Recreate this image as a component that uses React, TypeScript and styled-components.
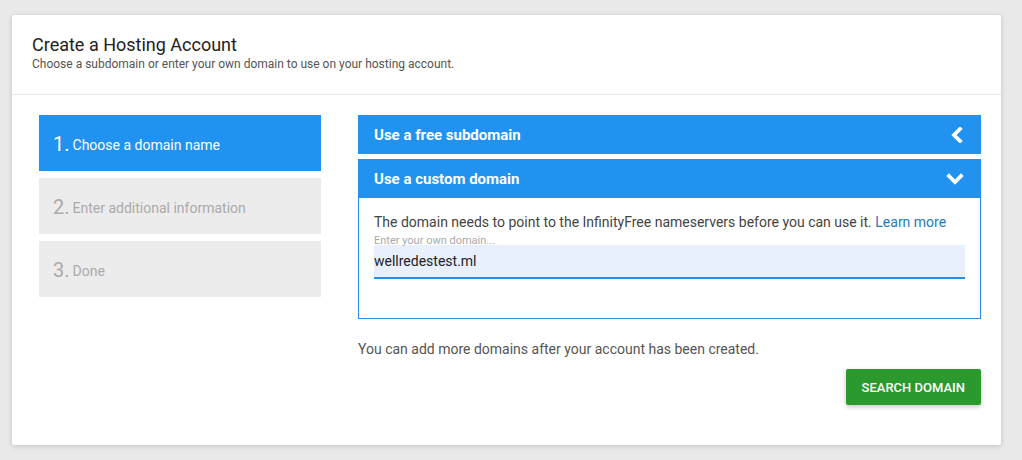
import React, { useState } from 'react';
import styled, { createGlobalStyle } from 'styled-components';

const GlobalStyle = createGlobalStyle`
  html, body {
    margin: 0;
    padding: 0;
    background: #e9e9e9;
    font-family: Roboto, "Liberation Sans", Arial, sans-serif;
  }
`;

const steps = ['Choose a domain name', 'Enter additional information', 'Done'];

const ChevronLeft = () => (
  <svg width="14" height="16" viewBox="0 0 14 16">
    <polyline points="10,2 4,8 10,14" fill="none" stroke="#fff" strokeWidth="3.8" strokeLinecap="square" />
  </svg>
);

const ChevronDown = () => (
  <svg width="18" height="12" viewBox="0 0 18 12">
    <polyline points="3,3 9,9 15,3" fill="none" stroke="#fff" strokeWidth="3.8" strokeLinecap="square" />
  </svg>
);

const App: React.FC = () => {
  const [domain, setDomain] = useState('wellredestest.ml');

  return (
    <Page>
      <GlobalStyle />
      <Card>
        <Header>
          <Title>Create a Hosting Account</Title>
          <Subtitle>Choose a subdomain or enter your own domain to use on your hosting account.</Subtitle>
        </Header>
        <Body>
          <Steps>
            {steps.map((label, i) => (
              <Step key={label} active={i === 0}>
                <StepNum>{i + 1}.</StepNum>
                <StepLabel>{label}</StepLabel>
              </Step>
            ))}
          </Steps>
          <Main>
            <PanelHead>
              <span>Use a free subdomain</span>
              <ChevronLeft />
            </PanelHead>
            <PanelHead>
              <span>Use a custom domain</span>
              <ChevronDown />
            </PanelHead>
            <PanelBody>
              <Note>
                The domain needs to point to the InfinityFree nameservers before you can use it.{' '}
                <Link href="#">Learn more</Link>
              </Note>
              <FieldLabel>Enter your own domain...</FieldLabel>
              <Input value={domain} onChange={(e) => setDomain(e.target.value)} />
            </PanelBody>
            <Hint>You can add more domains after your account has been created.</Hint>
            <Actions>
              <Button>SEARCH DOMAIN</Button>
            </Actions>
          </Main>
        </Body>
      </Card>
    </Page>
  );
};

export default App;

const Page = styled.div`
  padding: 15px 21px 15px 12px;
  height: 460px;
  box-sizing: border-box;
`;

const Card = styled.div`
  background: #fff;
  height: 430px;
  box-shadow: 0 1px 5px rgba(0, 0, 0, 0.18);
  border-radius: 2px;
`;

const Header = styled.div`
  padding: 18px 20px 0 20px;
  height: 80px;
  box-sizing: border-box;
  border-bottom: 1px solid #e8e8e8;
`;

const Title = styled.h1`
  margin: 0;
  font-size: 18px;
  line-height: 24px;
  font-weight: 400;
  color: #222;
`;

const Subtitle = styled.p`
  margin: 0;
  font-size: 12px;
  line-height: 14px;
  color: #555;
`;

const Body = styled.div`
  display: flex;
  gap: 37px;
  padding: 20px 20px 0 27px;
`;

const Steps = styled.div`
  width: 282px;
  display: flex;
  flex-direction: column;
  gap: 7px;
`;

const Step = styled.div<{ active?: boolean }>`
  height: 56px;
  box-sizing: border-box;
  display: flex;
  align-items: center;
  padding: 2px 14px 0 14px;
  background: ${({ active }) => (active ? '#2192f0' : '#ececec')};
  color: ${({ active }) => (active ? '#fff' : '#aaa')};
`;

const StepNum = styled.span`
  font-size: 20px;
  margin-right: 3px;
`;

const StepLabel = styled.span`
  font-size: 14px;
  padding-top: 2px;
`;

const Main = styled.div`
  flex: 1;
  display: flex;
  flex-direction: column;
`;

const PanelHead = styled.div`
  height: 39px;
  display: flex;
  align-items: center;
  justify-content: space-between;
  padding: 0 17px 0 16px;
  background: #2192f0;
  color: #fff;
  font-size: 15px;
  font-weight: 700;
  & + & {
    margin-top: 5px;
  }
`;

const PanelBody = styled.div`
  height: 121px;
  box-sizing: border-box;
  border: 1px solid #2192f0;
  border-top: none;
  padding: 14px 15px 0 15px;
`;

const Note = styled.p`
  margin: 0;
  font-size: 14px;
  line-height: 20px;
  color: #444;
`;

const Link = styled.a`
  color: #2a7ab8;
  text-decoration: none;
`;

const FieldLabel = styled.div`
  font-size: 11px;
  line-height: 12px;
  color: #aaa;
  margin-top: 3px;
`;

const Input = styled.input`
  display: block;
  width: 100%;
  box-sizing: border-box;
  height: 34px;
  margin-top: -2px;
  padding: 0;
  border: none;
  border-bottom: 2px solid #2192f0;
  background: #e8f0fe;
  font-family: Roboto, "Liberation Sans", Arial, sans-serif;
  font-size: 14px;
  color: #222;
  outline: none;
`;

const Hint = styled.p`
  margin: 20px 0 0 0;
  font-size: 14px;
  line-height: 20px;
  color: #555;
`;

const Actions = styled.div`
  display: flex;
  justify-content: flex-end;
  margin-top: 10px;
`;

const Button = styled.button`
  height: 36px;
  padding: 0 16px;
  border: none;
  border-radius: 2px;
  background: #2a9a2e;
  color: #fff;
  font-family: Roboto, "Liberation Sans", Arial, sans-serif;
  font-size: 13px;
  font-weight: 500;
  box-shadow: 0 2px 5px rgba(0, 0, 0, 0.22);
  cursor: pointer;
`;
